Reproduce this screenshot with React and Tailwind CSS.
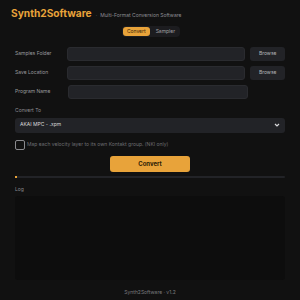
import React from "react"

const Field = ({ label, browse }) => (
  <div className="flex items-center h-[14px]">
    <div className="w-[53px] text-[5px] text-[#9a9a9e]">{label}</div>
    <div className="w-[180px] h-[14px] rounded-[3px] bg-[#222327] border border-[#2a2b2f]" />
    {browse && (
      <button
        type="button"
        className="ml-[5px] w-[35px] h-[14px] rounded-[3px] bg-[#222327] text-[5px] text-[#b5b5b8]"
      >
        Browse
      </button>
    )}
  </div>
)

const App = () => {
  return (
    <div
      className="w-[300px] h-[300px] bg-[#111111] flex flex-col overflow-hidden"
      style={{ fontFamily: "Inter, 'Liberation Sans', sans-serif" }}
    >
      <div className="flex items-baseline pl-[11px] pt-[6px]">
        <h1 className="text-[10.2px] font-bold text-[#e8a33a] leading-[14px]">
          Synth2Software
        </h1>
        <span className="ml-[4px] text-[5px] text-[#6b6b6f]">·</span>
        <span className="ml-[3px] text-[5px] text-[#8d8d91]">
          Multi-Format Conversion Software
        </span>
      </div>

      <div className="flex justify-center mt-[6px]">
        <div className="flex items-center gap-[2px] p-[1px] rounded-[4px] bg-[#1c1c1f] ml-[2px]">
          <div className="h-[9px] px-[4px] rounded-[3px] bg-[#e8a33a] text-[5px] leading-[9px] text-[#3a2608]">
            Convert
          </div>
          <div className="h-[9px] px-[4px] rounded-[3px] text-[5px] leading-[9px] text-[#a0a0a4]">
            Sampler
          </div>
        </div>
      </div>

      <div className="flex flex-col gap-[5px] px-[15px] mt-[10px]">
        <Field label="Samples Folder" browse />
        <Field label="Save Location" browse />
        <Field label="Program Name" />
      </div>

      <div className="px-[15px] mt-[8px] text-[5px] text-[#8d8d91]">Convert To</div>
      <div className="mx-[15px] mt-[3px] h-[15px] rounded-[3px] bg-[#222327] flex items-center justify-between px-[5px]">
        <span className="text-[5px] text-[#d8d8da]">AKAI MPC - .xpm</span>
        <svg width="6" height="4" viewBox="0 0 6 4">
          <path d="M1 1 L3 3 L5 1" stroke="#d8d8da" strokeWidth="1.2" fill="none" />
        </svg>
      </div>

      <div className="flex items-center px-[15px] mt-[7px]">
        <div className="w-[10px] h-[10px] rounded-[2px] border border-[#8a8a8e]" />
        <span className="ml-[2px] text-[5px] text-[#6e6e72]">
          Map each velocity layer to its own Kontakt group. (NKI only)
        </span>
      </div>

      <div className="flex justify-center mt-[6px]">
        <button
          type="button"
          className="w-[80px] h-[16px] rounded-[3px] bg-[#e8a33a] text-[6px] font-bold text-[#2b1c06]"
        >
          Convert
        </button>
      </div>

      <div className="mx-[15px] mt-[4px] h-[2px] bg-[#222327] rounded-full">
        <div className="w-[2px] h-[2px] bg-[#e8a33a]" />
      </div>

      <div className="px-[15px] mt-[8px] text-[5px] text-[#8d8d91]">Log</div>
      <div className="mx-[15px] mt-[3px] h-[84px] rounded-[3px] bg-[#0d0d0d]" />

      <div className="mt-[9px] text-center text-[5px] text-[#7a7a7e]">
        Synth2Software · v1.2
      </div>
    </div>
  )
}

export default App
